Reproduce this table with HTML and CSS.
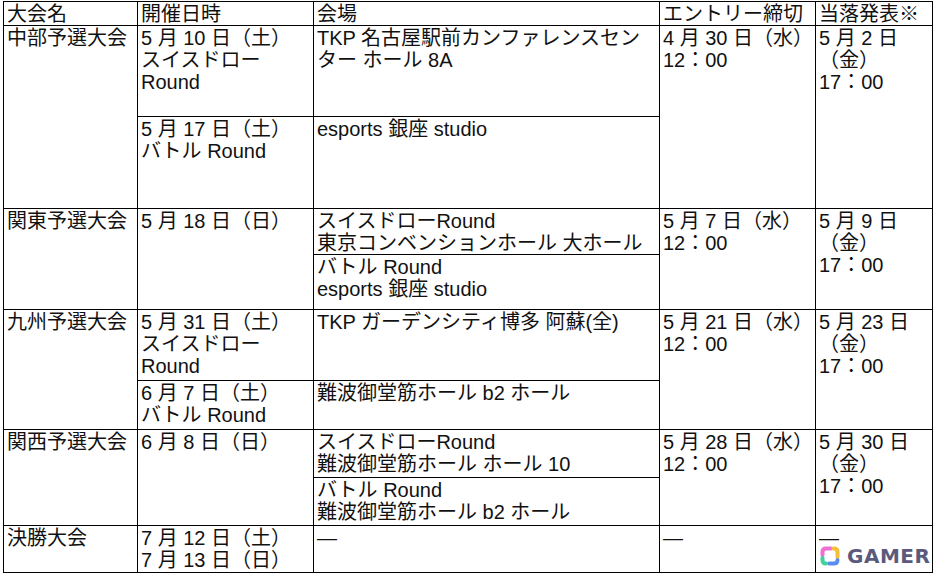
FILE: index.html
```html
<!DOCTYPE html>
<html lang="ja">
<head>
<meta charset="utf-8">
<link rel="stylesheet" href="styles.css">
</head>
<body>
<div class="page">
<table class="sched">
<colgroup>
<col class="c1"><col class="c2"><col class="c3"><col class="c4"><col class="c5">
</colgroup>
<thead>
<tr class="hd"><td>大会名</td><td>開催日時</td><td>会場</td><td>エントリー締切</td><td>当落発表※</td></tr>
</thead>
<tbody>
<tr class="r1">
<td rowspan="2">中部予選大会</td>
<td>5 月 10 日（土）<br>スイスドロー<br>Round</td>
<td>TKP 名古屋駅前カンファレンスセン<br>ター ホール 8A</td>
<td rowspan="2">4 月 30 日（水）<br>12：00</td>
<td rowspan="2">5 月 2 日<br>（金）<br>17：00</td>
</tr>
<tr class="r2">
<td>5 月 17 日（土）<br>バトル Round</td>
<td>esports 銀座 studio</td>
</tr>
<tr class="r3">
<td rowspan="2">関東予選大会</td>
<td rowspan="2">5 月 18 日（日）</td>
<td>スイスドローRound<br>東京コンベンションホール 大ホール</td>
<td rowspan="2">5 月 7 日（水）<br>12：00</td>
<td rowspan="2">5 月 9 日<br>（金）<br>17：00</td>
</tr>
<tr class="r4">
<td>バトル Round<br>esports 銀座 studio</td>
</tr>
<tr class="r5">
<td rowspan="2">九州予選大会</td>
<td>5 月 31 日（土）<br>スイスドロー<br>Round</td>
<td>TKP ガーデンシティ博多 阿蘇(全)</td>
<td rowspan="2">5 月 21 日（水）<br>12：00</td>
<td rowspan="2">5 月 23 日<br>（金）<br>17：00</td>
</tr>
<tr class="r6">
<td>6 月 7 日（土）<br>バトル Round</td>
<td>難波御堂筋ホール b2 ホール</td>
</tr>
<tr class="r7">
<td rowspan="2">関西予選大会</td>
<td rowspan="2">6 月 8 日（日）</td>
<td>スイスドローRound<br>難波御堂筋ホール ホール 10</td>
<td rowspan="2">5 月 28 日（水）<br>12：00</td>
<td rowspan="2">5 月 30 日<br>（金）<br>17：00</td>
</tr>
<tr class="r8">
<td>バトル Round<br>難波御堂筋ホール b2 ホール</td>
</tr>
<tr class="r9">
<td>決勝大会</td>
<td>7 月 12 日（土）<br>7 月 13 日（日）</td>
<td>—</td>
<td>—</td>
<td>—</td>
</tr>
</tbody>
</table>
<div class="mark">
<svg class="mark-icon" viewBox="0 0 22 22" width="22" height="22">
<path d="M3.5 10 V7 Q3.5 3.5 7 3.5 H12" fill="none" stroke="#ef6fd3" stroke-width="4" stroke-linecap="round"/>
<path d="M14.5 3.5 H15 Q18.5 3.5 18.5 7 V12" fill="none" stroke="#f6bf3a" stroke-width="4" stroke-linecap="round"/>
<path d="M18.5 15 Q18.5 18.5 15 18.5 H10" fill="none" stroke="#5b8ef0" stroke-width="4" stroke-linecap="round"/>
<path d="M7 18.5 Q3.5 18.5 3.5 15 V13" fill="none" stroke="#3fd39b" stroke-width="4" stroke-linecap="round"/>
</svg>
<span class="mark-text">GAMER</span>
</div>
</div>
</body>
</html>
```
FILE: styles.css
```css
html, body {
  margin: 0;
  padding: 0;
  background: #ffffff;
}

.page {
  position: relative;
  width: 937px;
  height: 577px;
  padding: 1px 0 0 3px;
  box-sizing: border-box;
}

.sched {
  border-collapse: collapse;
  table-layout: fixed;
  width: 929px;
  font-family: "Liberation Sans", "Noto Sans CJK JP", sans-serif;
  font-size: 20px;
  line-height: 22px;
  color: #111;
}

.c1 { width: 134px; }
.c2 { width: 176px; }
.c3 { width: 346px; }
.c4 { width: 156px; }
.c5 { width: 117px; }

.sched td {
  border: 1px solid #000;
  vertical-align: top;
  padding: 1px 0 0 3px;
  white-space: nowrap;
  overflow: hidden;
}

.hd { height: 24px; }
.r1 { height: 91px; }
.r2 { height: 92px; }
.r3 { height: 46px; }
.r4 { height: 55px; }
.r5 { height: 71px; }
.r6 { height: 49px; }
.r7 { height: 48px; }
.r8 { height: 48px; }
.r9 { height: 47px; }

.mark {
  position: absolute;
  left: 819px;
  top: 545px;
  display: flex;
  align-items: center;
  gap: 6px;
}

.mark-icon {
  display: block;
}

.mark-text {
  font-family: "DejaVu Sans", sans-serif;
  font-weight: bold;
  font-size: 20px;
  letter-spacing: 0.5px;
  color: #5a5a7c;
  line-height: 22px;
}
```
